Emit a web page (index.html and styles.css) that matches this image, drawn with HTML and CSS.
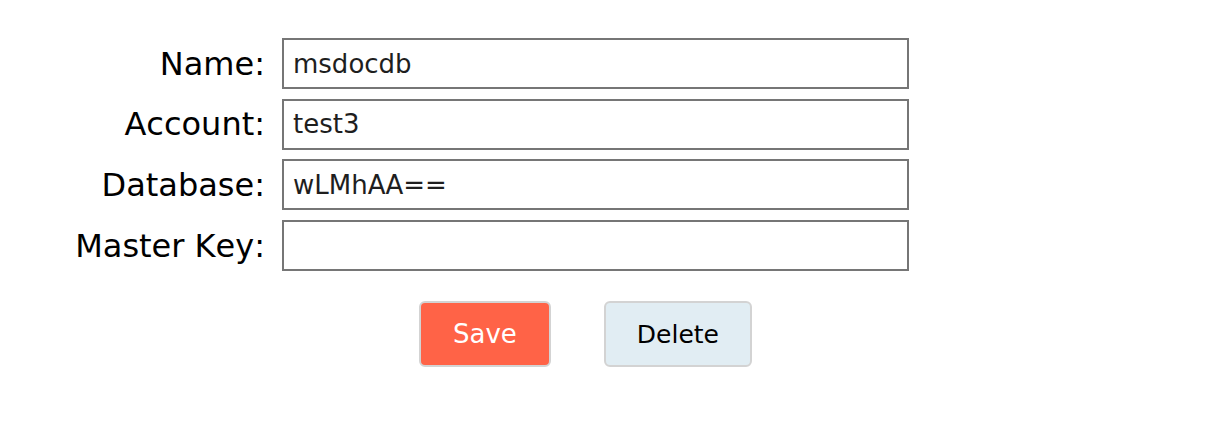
FILE: index.html
```html
<!DOCTYPE html>
<html>
<head>
<meta charset="utf-8">
<link rel="stylesheet" href="styles.css">
</head>
<body>
<form class="form">
  <div class="grid">
    <label class="label" for="name">Name:</label>
    <input class="field" id="name" type="text" value="msdocdb">
    <label class="label" for="account">Account:</label>
    <input class="field" id="account" type="text" value="test3">
    <label class="label" for="database">Database:</label>
    <input class="field" id="database" type="text" value="wLMhAA==">
    <label class="label" for="key">Master Key:</label>
    <input class="field" id="key" type="text" value="">
  </div>
  <div class="actions">
    <button type="button" class="btn btn-save">Save</button>
    <button type="button" class="btn btn-delete">Delete</button>
  </div>
</form>
</body>
</html>
```
FILE: styles.css
```css
html, body {
  margin: 0;
  padding: 0;
  background: #ffffff;
  font-family: "DejaVu Sans", Verdana, sans-serif;
}

.form {
  padding-top: 38px;
}

.grid {
  display: grid;
  grid-template-columns: 265px 627px;
  grid-auto-rows: 51px;
  column-gap: 17px;
  row-gap: 9.7px;
}

.label {
  font-size: 32px;
  color: #000;
  text-align: right;
  align-self: center;
  line-height: 1;
  white-space: nowrap;
  font-kerning: none;
}

.field {
  box-sizing: border-box;
  width: 627px;
  height: 51px;
  margin: 0;
  border: 2px solid #767676;
  border-radius: 0;
  padding: 0 9px;
  font-family: "DejaVu Sans", Verdana, sans-serif;
  font-size: 26px;
  font-kerning: none;
  color: #1e1e1e;
  background: #fff;
  outline: none;
}

.actions {
  display: flex;
  gap: 53px;
  padding-left: 419px;
  margin-top: 30px;
}

.btn {
  box-sizing: border-box;
  height: 66px;
  padding: 0 32px;
  border: 2px solid #d3d3d3;
  border-radius: 6px;
  font-family: "DejaVu Sans", Verdana, sans-serif;
  font-size: 26px;
  line-height: 1;
  font-kerning: none;
  cursor: pointer;
}

.btn-save {
  background: #ff6347;
  color: #ffffff;
}

.btn-delete {
  background: #e1edf3;
  color: #000000;
  font-size: 25px;
  padding: 0 31px;
}
```
